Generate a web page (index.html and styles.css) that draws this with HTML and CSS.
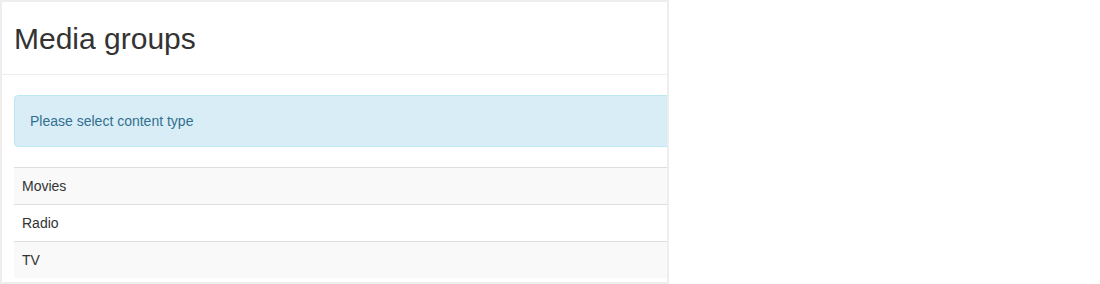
FILE: index.html
```html
<!DOCTYPE html>
<html>
<head>
<meta charset="utf-8">
<link rel="stylesheet" href="styles.css">
</head>
<body>
<div class="panel">
  <div class="panel-head">
    <h2 class="title">Media groups</h2>
  </div>
  <div class="panel-body">
    <div class="content">
      <div class="alert">Please select content type</div>
      <table class="list">
        <tbody>
          <tr><td>Movies</td></tr>
          <tr><td>Radio</td></tr>
          <tr><td>TV</td></tr>
        </tbody>
      </table>
    </div>
  </div>
</div>
</body>
</html>
```
FILE: styles.css
```css
html, body {
  margin: 0;
  padding: 0;
  background: #fff;
}
body {
  font-family: "Liberation Sans", Arial, sans-serif;
  font-size: 14px;
  line-height: 20px;
  color: #333;
}
.panel {
  box-sizing: border-box;
  width: 669px;
  height: 284px;
  border: 2px solid #eeeeee;
  overflow: hidden;
  background: #fff;
}
.panel-head {
  padding: 20px 12px 19px;
  border-bottom: 1px solid #eeeeee;
}
.title {
  margin: 0;
  font-size: 30px;
  line-height: 33px;
  font-weight: 400;
  color: #333;
}
.panel-body {
  padding: 20px 0 0 12px;
}
.content {
  width: 900px;
}
.alert {
  padding: 15px;
  border: 1px solid #bce8f1;
  border-radius: 4px;
  background: #d9edf7;
  color: #31708f;
  margin-bottom: 20px;
}
.list {
  width: 100%;
  border-collapse: collapse;
  border-spacing: 0;
}
.list td {
  padding: 8px;
  line-height: 20px;
  border-top: 1px solid #dddddd;
  vertical-align: top;
}
.list tr:nth-child(odd) td {
  background: #f9f9f9;
}
```
